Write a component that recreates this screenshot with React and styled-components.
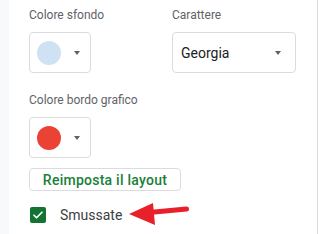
import React from 'react';
import styled, { createGlobalStyle } from 'styled-components';

const GlobalStyle = createGlobalStyle`
  html, body {
    margin: 0;
    padding: 0;
    background: #ffffff;
  }
  body {
    font-family: Roboto, "Liberation Sans", Arial, sans-serif;
    overflow: hidden;
  }
`;

const Page = styled.div`
  width: 319px;
  height: 234px;
  display: flex;
  background: #ffffff;
`;

const Gutter = styled.div`
  width: 9px;
  background: #f8f9fa;
  flex-shrink: 0;
`;

const Panel = styled.div`
  position: relative;
  width: 288px;
  padding: 7px 0 0 20px;
  border-right: 1px solid #dadce0;
  display: flex;
  flex-direction: column;
`;

const Row = styled.div`
  display: grid;
  grid-template-columns: 143px 124px;
`;

const Field = styled.div`
  display: flex;
  flex-direction: column;
  gap: 9px;
  margin-top: ${p => p.$top || 0}px;
`;

const Label = styled.div`
  font-size: 12px;
  line-height: 16px;
  color: #5f6368;
`;

const Caret = styled.span`
  width: 0;
  height: 0;
  border-left: 3.5px solid transparent;
  border-right: 3.5px solid transparent;
  border-top: 4px solid #5f6368;
`;

const ColorButton = styled.div`
  box-sizing: border-box;
  width: 62px;
  height: 41px;
  border: 1px solid #dadce0;
  border-radius: 4px;
  display: flex;
  align-items: center;
  padding: 0 10px 0 7px;
  justify-content: space-between;
`;

const Swatch = styled.span`
  width: 24px;
  height: 24px;
  border-radius: 50%;
  background: ${p => p.$color};
`;

const Select = styled.div`
  box-sizing: border-box;
  width: 124px;
  height: 41px;
  border: 1px solid #dadce0;
  border-radius: 4px;
  display: flex;
  align-items: center;
  justify-content: space-between;
  padding: 0 14px 0 8px;
  font-size: 14px;
  color: #202124;
`;

const ResetButton = styled.button`
  box-sizing: border-box;
  width: 152px;
  height: 23px;
  margin-top: 10px;
  border: 1px solid #dadce0;
  border-radius: 4px;
  background: #ffffff;
  color: #188038;
  font-family: Roboto, "Liberation Sans", Arial, sans-serif;
  font-weight: 500;
  font-size: 14px;
  letter-spacing: 0.25px;
  padding: 0;
  text-align: center;
`;

const CheckRow = styled.label`
  display: flex;
  align-items: center;
  gap: 14px;
  height: 24px;
  margin-top: 12px;
  padding-left: 1px;
`;

const CheckBox = styled.span`
  width: 16px;
  height: 16px;
  border-radius: 2px;
  background: #137333;
  display: flex;
  align-items: center;
  justify-content: center;
`;

const CheckText = styled.span`
  font-size: 14px;
  color: #3c4043;
`;

const Pointer = styled.svg`
  position: absolute;
  left: 118px;
  top: 198px;
`;

export default function App() {
  return (
    <>
      <GlobalStyle />
      <Page>
        <Gutter />
        <Panel>
          <Row>
            <Field>
              <Label>Colore sfondo</Label>
              <ColorButton>
                <Swatch $color="#cfe2f3" />
                <Caret />
              </ColorButton>
            </Field>
            <Field>
              <Label>Carattere</Label>
              <Select>
                <span>Georgia</span>
                <Caret />
              </Select>
            </Field>
          </Row>
          <Field $top={19}>
            <Label>Colore bordo grafico</Label>
            <ColorButton>
              <Swatch $color="#ea4335" />
              <Caret />
            </ColorButton>
          </Field>
          <ResetButton>Reimposta il layout</ResetButton>
          <CheckRow>
            <CheckBox>
              <svg width="12" height="12" viewBox="0 0 24 24">
                <path d="M4 12.5l5 5L20 6.5" fill="none" stroke="#fff" strokeWidth="3.4" strokeLinecap="round" strokeLinejoin="round" />
              </svg>
            </CheckBox>
            <CheckText>Smussate</CheckText>
          </CheckRow>
          <Pointer width="64" height="30" viewBox="0 0 64 30">
            <path d="M22 14.5 L59.5 11" stroke="#e8202a" strokeWidth="5" strokeLinecap="round" fill="none" />
            <polygon points="2,16 26,5 28,27" fill="#e8202a" />
          </Pointer>
        </Panel>
      </Page>
    </>
  );
}
